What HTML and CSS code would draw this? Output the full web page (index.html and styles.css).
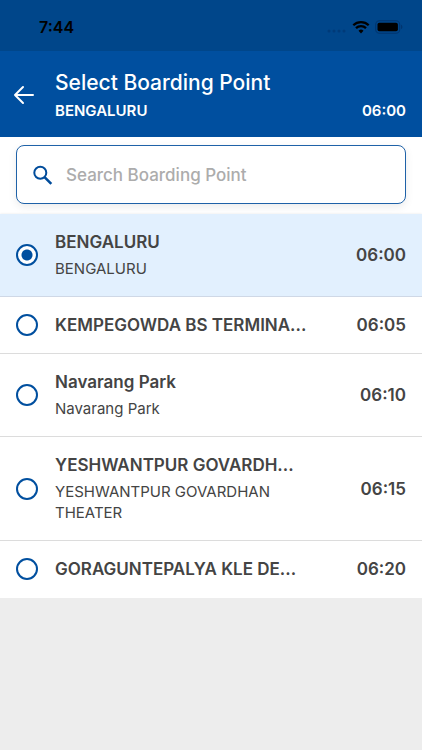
FILE: index.html
```html
<!DOCTYPE html>
<html lang="en">
<head>
    <meta charset="UTF-8">
    <meta name="viewport" content="width=device-width, initial-scale=1.0">
    <title>Select Boarding Point</title>
    <link rel="stylesheet" href="styles.css">
</head>
<body>

    <!-- Status bar -->
    <div class="status-bar">
        <span class="clock">7:44</span>
        <div class="status-icons">
            <svg width="20" height="4" viewBox="0 0 20 4" fill="#003a78" aria-hidden="true">
                <circle cx="2" cy="2" r="1.5"/>
                <circle cx="7" cy="2" r="1.5"/>
                <circle cx="12" cy="2" r="1.5"/>
                <circle cx="17" cy="2" r="1.5"/>
            </svg>
            <svg width="18" height="14" viewBox="0 0 18 14" fill="none" stroke="#000" stroke-width="2.3" aria-hidden="true">
                <path d="M1.3 5.2a11 11 0 0 1 15.4 0"/>
                <path d="M4 8.1a7.2 7.2 0 0 1 10 0"/>
                <path d="M9 13.4l-2.5-2.6a3.6 3.6 0 0 1 5 0z" fill="#000" stroke="none"/>
            </svg>
            <svg width="28" height="14" viewBox="0 0 28 14" aria-hidden="true">
                <rect x="0.7" y="0.7" width="24" height="12.6" rx="3.8" fill="none" stroke="#00356f" stroke-width="1.1"/>
                <rect x="2.5" y="2.7" width="20.4" height="8.6" rx="1.8" fill="#000"/>
                <path d="M26 4.8v4.4c.9-.4 1.4-1.2 1.4-2.2s-.5-1.8-1.4-2.2z" fill="#00356f"/>
            </svg>
        </div>
    </div>

    <!-- Header -->
    <header class="header">
        <button class="back-btn" type="button" aria-label="Back">
            <svg width="22" height="20" viewBox="0 0 22 20" fill="none" stroke="#fff" stroke-width="2" stroke-linecap="round" stroke-linejoin="round" aria-hidden="true">
                <path d="M20 10H2M10 2L2 10l8 8"/>
            </svg>
        </button>
        <div class="header-text">
            <h1>Select Boarding Point</h1>
            <div class="header-info">
                <span>BENGALURU</span>
                <span>06:00</span>
            </div>
        </div>
    </header>

    <main>
        <!-- Search -->
        <div class="search">
            <label class="search-box">
                <svg width="20" height="20" viewBox="0 0 20 20" fill="none" stroke="#004c9b" aria-hidden="true">
                    <circle cx="7.3" cy="7.8" r="6" stroke-width="2"/>
                    <path d="M11.8 12.3l6.5 6.5" stroke-width="2.6"/>
                </svg>
                <input type="text" placeholder="Search Boarding Point" aria-label="Search Boarding Point">
            </label>
        </div>

        <!-- Boarding points -->
        <div class="points">
            <label class="point">
                <input type="radio" name="point" checked>
                <span class="point-text">
                    <span class="point-name">BENGALURU</span>
                    <span class="point-address">BENGALURU</span>
                </span>
                <span class="point-time">06:00</span>
            </label>
            <label class="point">
                <input type="radio" name="point">
                <span class="point-text">
                    <span class="point-name">KEMPEGOWDA BS TERMINA...</span>
                </span>
                <span class="point-time">06:05</span>
            </label>
            <label class="point">
                <input type="radio" name="point">
                <span class="point-text">
                    <span class="point-name">Navarang Park</span>
                    <span class="point-address">Navarang Park</span>
                </span>
                <span class="point-time">06:10</span>
            </label>
            <label class="point">
                <input type="radio" name="point">
                <span class="point-text">
                    <span class="point-name">YESHWANTPUR GOVARDH...</span>
                    <span class="point-address">YESHWANTPUR GOVARDHAN THEATER</span>
                </span>
                <span class="point-time">06:15</span>
            </label>
            <label class="point">
                <input type="radio" name="point">
                <span class="point-text">
                    <span class="point-name">GORAGUNTEPALYA KLE DE...</span>
                </span>
                <span class="point-time">06:20</span>
            </label>
        </div>
    </main>

</body>
</html>
```

FILE: styles.css
```css
* {
    box-sizing: border-box;
}

body {
    font-family: Inter, 'Liberation Sans', sans-serif;
    margin: 0;
    background-color: #ededed;
    color: #444;
}

/* Status bar */
.status-bar {
    display: flex;
    justify-content: space-between;
    align-items: center;
    height: 51px;
    padding: 3px 19px 0 39px;
    background-color: #00468a;
    color: #000;
}

.clock {
    font-size: 16px;
    font-weight: 600;
}

.status-icons {
    display: flex;
    align-items: center;
    gap: 5px;
}

.status-icons svg:first-child {
    margin-top: 8px;
}

/* Header */
.header {
    display: flex;
    align-items: center;
    gap: 20px;
    padding: 18px 16px 16px 13px;
    background-color: #004f9f;
    color: #fff;
}

.back-btn {
    display: flex;
    padding: 0;
    border: none;
    background: none;
    cursor: pointer;
}

.header-text {
    flex: 1;
}

.header h1 {
    margin: 0 0 4px;
    font-size: 21px;
    line-height: 28px;
    font-weight: 500;
}

.header-info {
    display: flex;
    justify-content: space-between;
    font-size: 15px;
    line-height: 20px;
    font-weight: 600;
}

/* Search */
.search {
    padding: 8px 16px 10px;
    background-color: #fff;
}

.search-box {
    display: flex;
    align-items: center;
    gap: 13px;
    height: 59px;
    padding: 0 16px;
    border: 1px solid #1f62a8;
    border-radius: 8px;
    background-color: #fff;
    box-shadow: 0 3px 8px rgba(0, 0, 0, 0.08);
}

.search-box input {
    flex: 1;
    min-width: 0;
    padding: 0;
    border: none;
    outline: none;
    background: none;
    font-family: inherit;
    font-size: 17px;
    font-weight: 500;
    color: #444;
}

.search-box input::placeholder {
    color: #acacac;
    opacity: 1;
}

/* Boarding points */
.points {
    background-color: #fff;
    box-shadow: 0 1px 3px rgba(0, 0, 0, 0.2);
}

.point {
    display: flex;
    align-items: center;
    padding: 17px 16px;
    border-bottom: 1px solid #dcdcdc;
    cursor: pointer;
}

.point:last-child {
    border-bottom-color: #fff;
}

.point:has(input:checked) {
    background-color: #e2f0fe;
    border-bottom-color: #cfd8e6;
}

.point input {
    appearance: none;
    flex: none;
    width: 22px;
    height: 22px;
    margin: 0 17px 0 0;
    border: 2px solid #004f9f;
    border-radius: 50%;
}

.point input:checked {
    background: radial-gradient(circle, #004f9f 5px, #fff 6px);
}

.point-text {
    flex: 1;
    margin-right: 48px;
}

.point-name,
.point-address {
    display: block;
}

.point-name {
    font-size: 17px;
    line-height: 22px;
    font-weight: 600;
}

.point-address {
    margin-top: 5px;
    font-size: 15px;
    line-height: 21px;
}

.point-time {
    font-size: 17px;
    font-weight: 600;
}
```
